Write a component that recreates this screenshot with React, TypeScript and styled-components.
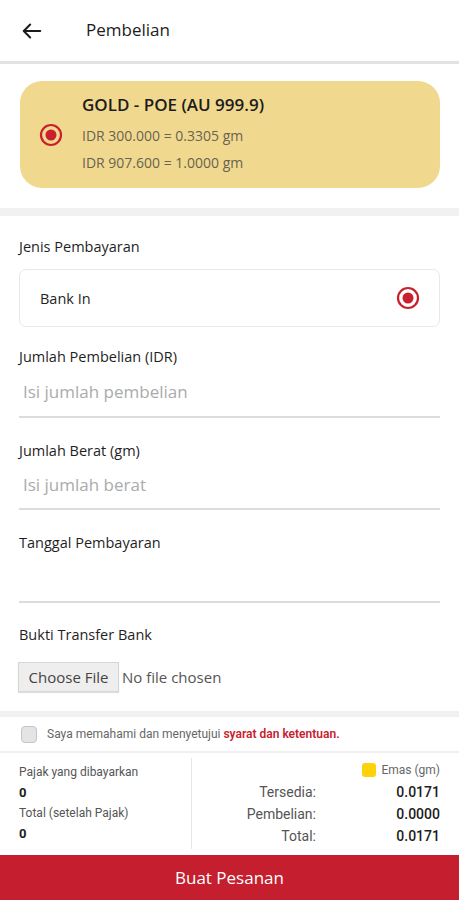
import React from "react"
import styled, { createGlobalStyle } from "styled-components"

const GlobalStyle = createGlobalStyle`
  html, body {
    margin: 0;
    padding: 0;
    background: #fff;
    font-family: "Open Sans", "Noto Sans", sans-serif;
    color: #222;
  }
  * { box-sizing: border-box; }
`

const Page = styled.div`
  width: 459px;
  height: 900px;
  display: flex;
  flex-direction: column;
  overflow: hidden;
`

const Header = styled.div`
  height: 64px;
  display: flex;
  align-items: center;
  padding-left: 21px;
  gap: 43px;
  border-bottom: 3px solid #e2e2e2;
`

const Title = styled.div`
  font-size: 17px;
  color: #1c1c1c;
  font-weight: 500;
  padding-bottom: 2px;
`

const GoldSection = styled.div`
  padding: 17px 19px 20px 20px;
`

const GoldCard = styled.div`
  height: 107px;
  background: #f0d98f;
  border-radius: 22px;
  display: flex;
  align-items: center;
  padding-left: 19px;
  gap: 19px;
`

const GoldText = styled.div`
  display: flex;
  flex-direction: column;
`

const GoldTitle = styled.div`
  font-size: 17px;
  font-weight: 600;
  color: #1c1c1c;
  line-height: 24px;
  margin-bottom: 5px;
`

const GoldLine = styled.div`
  font-size: 14px;
  color: #6b6250;
  line-height: 27px;
`

const Divider = styled.div<{ h: number }>`
  height: ${(p) => p.h}px;
  background: #f1f1f1;
  flex-shrink: 0;
`

const Form = styled.div`
  padding: 0 19px;
  display: flex;
  flex-direction: column;
`

const Label = styled.div<{ mt: number }>`
  font-size: 14.5px;
  color: #1f1f1f;
  margin-top: ${(p) => p.mt}px;
  line-height: 20px;
`

const OptionBox = styled.div`
  margin-top: 12px;
  height: 58px;
  border: 1px solid #e8e8e8;
  border-radius: 7px;
  display: flex;
  align-items: center;
  justify-content: space-between;
  padding: 0 19px 0 20px;
  font-size: 14.5px;
  color: #1f1f1f;
`

const Field = styled.div<{ h: number }>`
  height: ${(p) => p.h}px;
  border-bottom: 2px solid #dcdcdc;
  display: flex;
  align-items: center;
  padding-left: 4px;
  font-size: 17px;
  color: #ababab;
`

const FileRow = styled.div`
  margin-top: 17px;
  display: flex;
  align-items: center;
  gap: 3px;
  font-size: 15px;
  color: #555;
`

const FileButton = styled.div`
  width: 101px;
  height: 30px;
  background: #eeeeee;
  border: 1px solid #d6d6d6;
  box-shadow: 0 1px 1px rgba(0, 0, 0, 0.12);
  display: flex;
  align-items: center;
  justify-content: center;
  color: #444;
  margin-left: -1px;
`

const AgreeRow = styled.div`
  height: 36px;
  display: flex;
  align-items: center;
  padding-left: 21px;
  gap: 10px;
  font-family: Roboto, "Noto Sans", sans-serif;
  font-size: 12px;
  color: #666;
  border-bottom: 2px solid #efefef;
`

const CheckBox = styled.div`
  width: 16px;
  height: 17px;
  border-radius: 4px;
  background: #e4e4e4;
  border: 1px solid #c4c4c4;
`

const Terms = styled.span`
  color: #c8202f;
  font-weight: 600;
`

const Summary = styled.div`
  flex: 1;
  display: grid;
  grid-template-columns: 191px 1fr;
  font-family: Roboto, "Noto Sans", sans-serif;
`

const LeftCol = styled.div`
  padding: 9px 0 0 19px;
  display: flex;
  flex-direction: column;
`

const RightCol = styled.div`
  border-left: 1px solid #e6e6e6;
  margin: 5px 0 6px;
  padding: 3px 19px 0 0;
  display: flex;
  flex-direction: column;
`

const SmallLabel = styled.div`
  font-size: 12px;
  color: #555;
  line-height: 20px;
`

const BoldVal = styled.div`
  font-size: 13px;
  font-weight: 700;
  color: #1c1c1c;
  line-height: 21px;
`

const Legend = styled.div`
  display: flex;
  justify-content: flex-end;
  align-items: center;
  gap: 5px;
  font-size: 12px;
  color: #666;
  line-height: 18px;
  margin-bottom: 2px;
`

const Swatch = styled.span`
  width: 14px;
  height: 14px;
  border-radius: 3px;
  background: #fdd20a;
`

const StatRow = styled.div`
  display: grid;
  grid-template-columns: 1fr 124px;
  font-size: 14px;
  line-height: 22px;
`

const StatLabel = styled.span`
  text-align: right;
  color: #555;
`

const StatValue = styled.span`
  text-align: right;
  color: #1c1c1c;
  font-weight: 500;
`

const SubmitButton = styled.div`
  height: 45px;
  background: #c41e2f;
  color: #fff;
  font-size: 17px;
  display: flex;
  align-items: center;
  justify-content: center;
  flex-shrink: 0;
`

const Radio = () => (
  <svg width="24" height="24" viewBox="0 0 24 24">
    <circle cx="12" cy="12" r="10" fill="none" stroke="#c8202f" strokeWidth="2.2" />
    <circle cx="12" cy="12" r="5.5" fill="#c8202f" />
  </svg>
)

const BackArrow = () => (
  <svg width="22" height="22" viewBox="0 0 24 24" fill="none" stroke="#1c1c1c" strokeWidth="2.2" strokeLinecap="round" strokeLinejoin="round">
    <path d="M21 12H3.5" />
    <path d="M10 5l-7 7 7 7" />
  </svg>
)

export default function App() {
  const stats = [
    ["Tersedia:", "0.0171"],
    ["Pembelian:", "0.0000"],
    ["Total:", "0.0171"],
  ]
  return (
    <Page>
      <GlobalStyle />
      <Header>
        <BackArrow />
        <Title>Pembelian</Title>
      </Header>
      <GoldSection>
        <GoldCard>
          <Radio />
          <GoldText>
            <GoldTitle>GOLD - POE (AU 999.9)</GoldTitle>
            <GoldLine>IDR 300.000 = 0.3305 gm</GoldLine>
            <GoldLine>IDR 907.600 = 1.0000 gm</GoldLine>
          </GoldText>
        </GoldCard>
      </GoldSection>
      <Divider h={8} />
      <Form>
        <Label mt={21}>Jenis Pembayaran</Label>
        <OptionBox>
          <span>Bank In</span>
          <Radio />
        </OptionBox>
        <Label mt={20}>Jumlah Pembelian (IDR)</Label>
        <Field h={51}>Isi jumlah pembelian</Field>
        <Label mt={23}>Jumlah Berat (gm)</Label>
        <Field h={49}>Isi jumlah berat</Field>
        <Label mt={23}>Tanggal Pembayaran</Label>
        <Field h={50}></Field>
        <Label mt={22}>Bukti Transfer Bank</Label>
        <FileRow>
          <FileButton>Choose File</FileButton>
          <span>No file chosen</span>
        </FileRow>
      </Form>
      <Divider h={6} style={{ marginTop: 19 }} />
      <AgreeRow>
        <CheckBox />
        <span>
          Saya memahami dan menyetujui <Terms>syarat dan ketentuan.</Terms>
        </span>
      </AgreeRow>
      <Summary>
        <LeftCol>
          <SmallLabel>Pajak yang dibayarkan</SmallLabel>
          <BoldVal>0</BoldVal>
          <SmallLabel>Total (setelah Pajak)</SmallLabel>
          <BoldVal>0</BoldVal>
        </LeftCol>
        <RightCol>
          <Legend>
            <Swatch />
            Emas (gm)
          </Legend>
          {stats.map(([l, v]) => (
            <StatRow key={l}>
              <StatLabel>{l}</StatLabel>
              <StatValue>{v}</StatValue>
            </StatRow>
          ))}
        </RightCol>
      </Summary>
      <SubmitButton>Buat Pesanan</SubmitButton>
    </Page>
  )
}
